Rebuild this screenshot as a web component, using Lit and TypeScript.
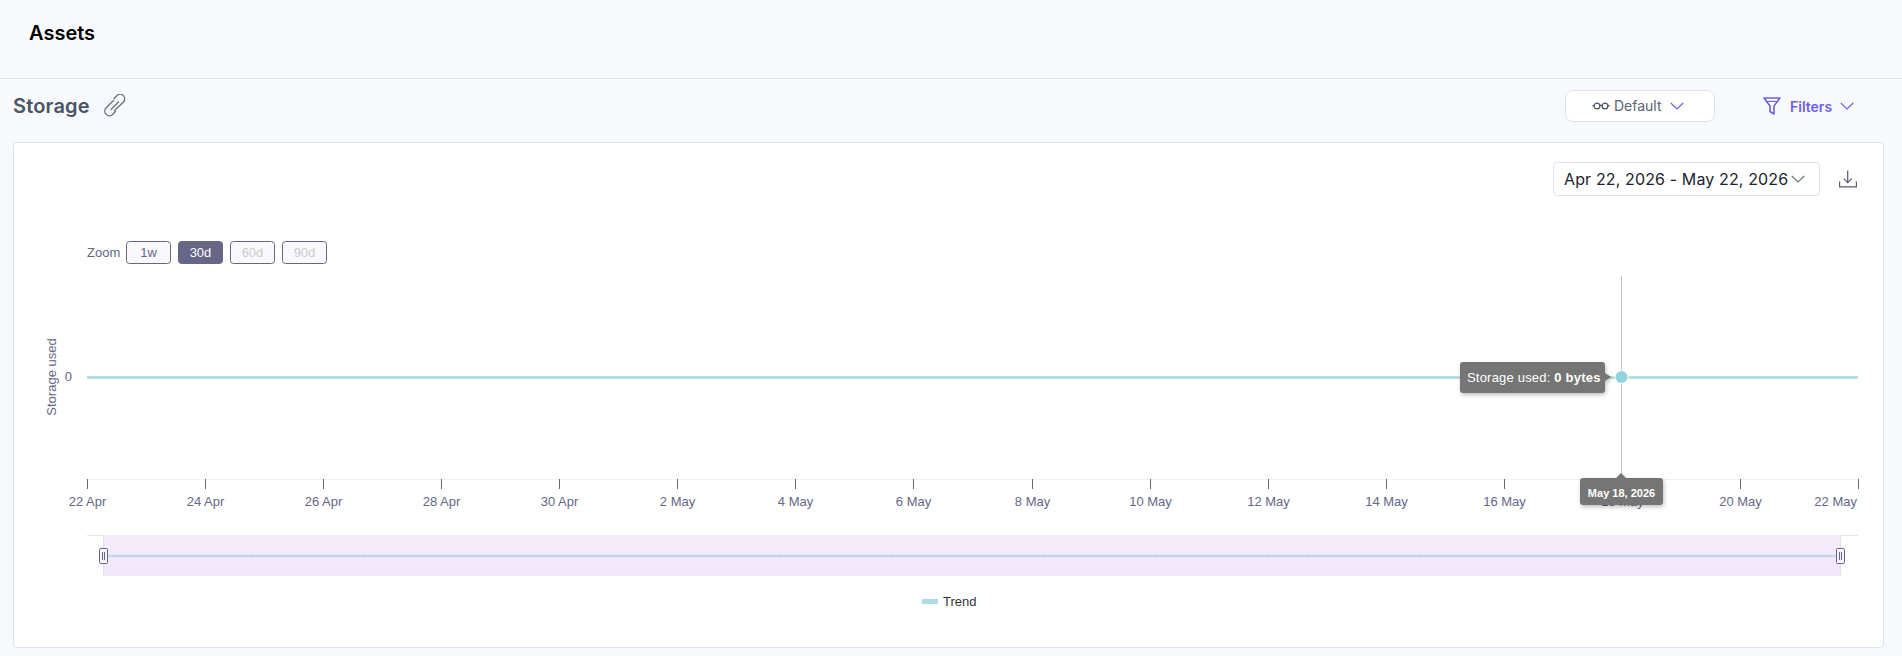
import { LitElement, html, svg, css } from 'lit';
import { customElement } from 'lit/decorators.js';

const TICKS = ['22 Apr', '24 Apr', '26 Apr', '28 Apr', '30 Apr', '2 May', '4 May', '6 May', '8 May', '10 May', '12 May', '14 May', '16 May', '18 May', '20 May', '22 May'];
const X0 = 87;
const X1 = 1858;
const CROSS = 1621;

const chevron = (color: string) => html`<svg class="chev" width="14" height="8" viewBox="0 0 14 8" fill="none"><path d="M.8 1l6.2 6 6.2-6" stroke=${color} stroke-width="1.15"/></svg>`;

@customElement('app-root')
export class AppRoot extends LitElement {
  static styles = css`
    :host {
      display: block;
      height: 656px;
      background: #f8f9fd;
      font-family: Inter, 'Liberation Sans', sans-serif;
      overflow: hidden;
    }
    .top {
      height: 79px;
      box-sizing: border-box;
      border-bottom: 1px solid #dde3ee;
      padding: 21px 29px 0;
      font-size: 20px;
      line-height: 24px;
      font-weight: 600;
      color: #000;
    }
    .bar {
      height: 63px;
      display: flex;
      align-items: center;
      padding: 0 0 9px 13px;
      box-sizing: border-box;
    }
    .title {
      font-size: 20px;
      font-weight: 600;
      letter-spacing: 0.15px;
      color: #4a5463;
      margin-right: 13px;
    }
    .spacer {
      flex: 1;
    }
    .view {
      width: 150px;
      height: 32px;
      box-sizing: border-box;
      padding-left: 26px;
      background: #fff;
      border: 1px solid #dde3ee;
      border-radius: 8px;
      display: flex;
      align-items: center;
      font-size: 14px;
      line-height: 28px;
      color: #5a6473;
    }
    .view svg:first-child {
      margin-right: 4px;
    }
    .view .chev {
      margin-left: 8px;
    }
    .filters {
      width: 187px;
      padding-left: 48px;
      box-sizing: border-box;
      display: flex;
      align-items: center;
      font-size: 14px;
      font-weight: 600;
      color: #6f5ee8;
    }
    .filters svg:first-child {
      margin-right: 9px;
    }
    .filters .chev {
      margin-left: 8px;
    }
    .card {
      margin: 0 18px 0 13px;
      height: 506px;
      box-sizing: border-box;
      background: #fff;
      border: 1px solid #dde3ee;
      border-radius: 4px;
      position: relative;
    }
    .tools {
      display: flex;
      justify-content: flex-end;
      align-items: center;
      gap: 19px;
      padding: 19px 26px 0 0;
      position: relative;
      z-index: 1;
    }
    .range {
      width: 267px;
      height: 34px;
      box-sizing: border-box;
      border: 1px solid #dde3ee;
      border-radius: 4px;
      display: flex;
      align-items: center;
      padding-left: 10px;
      font-size: 16px;
      letter-spacing: 0.13px;
      color: #1d2430;
      white-space: nowrap;
    }
    .range .chev {
      margin-left: 3px;
    }
    .plot {
      position: absolute;
      left: -14px;
      top: -143px;
    }
    .plot text {
      font-family: 'Liberation Sans', Arial, sans-serif;
      font-size: 13px;
      fill: #666687;
    }
    .plot .tip {
      fill: #fff;
      letter-spacing: 0.2px;
    }
    .plot .tipdate {
      fill: #fff;
      font-size: 11px;
      font-weight: 700;
    }
    .plot .legend {
      fill: #333;
    }
  `;

  private zoomBtn(x: number, label: string, mode: string) {
    const fill = mode === 'on' ? '#666687' : '#f9f8fe';
    const ink = mode === 'on' ? '#fff' : mode === 'off' ? '#cccccc' : '#666687';
    return svg`<rect x=${x + 0.5} y="241.5" width="44" height="22" rx="3" fill=${fill} stroke="#666687"/>
      <text x=${x + 22.5} y="257" text-anchor="middle" style="fill:${ink}">${label}</text>`;
  }

  private chart() {
    const step = (X1 - X0) / (TICKS.length - 1);
    const nav: number[] = [];
    for (let x = 110; x < 1836; x += 6.6) nav.push(x);
    return svg`
      <defs>
        <linearGradient id="mask" x1="0" y1="0" x2="0" y2="1"><stop offset="0" stop-color="#f5ecfb"/><stop offset="1" stop-color="#f0e8fa"/></linearGradient>
        <filter id="sh" x="-10%" y="-20%" width="120%" height="150%"><feDropShadow dx="1" dy="2" stdDeviation="2" flood-color="#000" flood-opacity="0.25"/></filter>
      </defs>
      <text x="87" y="257">Zoom</text>
      ${this.zoomBtn(126, '1w', 'idle')}
      ${this.zoomBtn(178, '30d', 'on')}
      ${this.zoomBtn(230, '60d', 'off')}
      ${this.zoomBtn(282, '90d', 'off')}
      <text transform="translate(56 377) rotate(-90)" text-anchor="middle">Storage used</text>
      <text x="72" y="381" text-anchor="end">0</text>
      <line x1=${X0} x2=${X1} y1="479.5" y2="479.5" stroke="#f0f0f3"/>
      ${TICKS.map((t, i) => {
        const x = Math.round(X0 + step * i) + 0.5;
        const last = i === TICKS.length - 1;
        return svg`<line x1=${x} x2=${x} y1="479" y2="489" stroke="#666687"/>
          <text x=${last ? X1 - 1 : x} y="506" text-anchor=${last ? 'end' : 'middle'}>${t}</text>`;
      })}
      <line x1=${X0} x2=${X1} y1="377.5" y2="377.5" stroke="#a0dbe0" stroke-width="2.6"/>
      <line x1=${CROSS + 0.5} x2=${CROSS + 0.5} y1="276" y2="479" stroke="#c4c4c8"/>
      <circle cx=${CROSS + 0.5} cy="377" r="7" fill="#fff"/>
      <circle cx=${CROSS + 0.5} cy="377" r="6" fill="#8ed3df"/>
      <g filter="url(#sh)">
        <path d="M1463 362h139a3 3 0 0 1 3 3v8l6 4-6 4v9a3 3 0 0 1-3 3h-139a3 3 0 0 1-3-3v-25a3 3 0 0 1 3-3z" fill="#757575"/>
      </g>
      <text class="tip" x="1467" y="382">Storage used: <tspan font-weight="700">0 bytes</tspan></text>
      <g filter="url(#sh)">
        <path d="M1583 478h33l5-5 5 5h34a3 3 0 0 1 3 3v21a3 3 0 0 1-3 3h-77a3 3 0 0 1-3-3v-21a3 3 0 0 1 3-3z" fill="#757575"/>
      </g>
      <text class="tipdate" x="1621.5" y="497" text-anchor="middle">May 18, 2026</text>
      <line x1=${X0} x2=${X1} y1="535.5" y2="535.5" stroke="#e6e6ec"/>
      <rect x="103" y="535" width="1738" height="41" fill="url(#mask)"/>
      <line x1="103.5" x2="103.5" y1="535" y2="576" stroke="#e3e3ef"/>
      <line x1="1840.5" x2="1840.5" y1="535" y2="576" stroke="#dfe3f2"/>
      <line x1="103" x2="1841" y1="556" y2="556" stroke="#bfd5ea" stroke-width="2.4"/>
      ${nav.map((x) => svg`<line x1=${x} x2=${x} y1="555" y2="557" stroke="#cddcec"/>`)}
      ${[99.5, 1836.5].map((x) => svg`<rect x=${x} y="548.5" width="8" height="15" rx="1" fill="#f4f3fb" stroke="#666687"/>
        <line x1=${x + 3} x2=${x + 3} y1="552" y2="560" stroke="#666687"/>
        <line x1=${x + 5} x2=${x + 5} y1="552" y2="560" stroke="#666687"/>`)}
      <rect x="922" y="599" width="16" height="5" fill="#a9dde3"/>
      <text class="legend" x="943" y="606">Trend</text>
    `;
  }

  render() {
    return html`
      <div class="top">Assets</div>
      <div class="bar">
        <span class="title">Storage</span>
        <svg width="24" height="24" viewBox="0 0 24 24" fill="none" stroke="#6b7280" stroke-width="1.4" stroke-linecap="round">
          <path d="M10.5 6.5l-7.5 7.5a4.6 4.6 0 0 0 6.5 6.5l3-3"/>
          <path d="M11.5 16.5l9-8.5a4.6 4.6 0 0 0-6.5-6.5l-3 3"/>
          <path d="M8 15.5l7.5-7.5"/>
        </svg>
        <span class="spacer"></span>
        <div class="view">
          <svg width="18" height="8" viewBox="0 0 18 8" fill="none" stroke="#4a5463" stroke-width="1.2"><circle cx="5" cy="4" r="2.9"/><circle cx="13" cy="4" r="2.9"/><path d="M7.9 3.4h2.2M2.1 3.4L.3 4M15.9 3.4l1.8.6"/></svg>
          <span>Default</span>
          ${chevron('#6f5ee8')}
        </div>
        <div class="filters">
          <svg width="18" height="18" viewBox="0 0 18 18" fill="none" stroke="#6f5ee8" stroke-width="1.6" stroke-linejoin="round"><path d="M1 1h16l-6 8v8l-4-2.5V9z"/><path d="M3.5 4.4h11" stroke-width="1.1"/></svg>
          <span>Filters</span>
          ${chevron('#6f5ee8')}
        </div>
      </div>
      <div class="card">
        <svg class="plot" width="1902" height="656" viewBox="0 0 1902 656">${this.chart()}</svg>
        <div class="tools">
          <div class="range">
            <span>Apr 22, 2026 - May 22, 2026</span>
            ${chevron('#6b7280')}
          </div>
          <svg width="18" height="18" viewBox="0 0 18 18" fill="none" stroke="#555f6e" stroke-width="1.2"><path d="M8.7 .5v12M4.7 8.7l4 4 4-4"/><path d="M.6 11.5v5.4h16.8v-5.4"/></svg>
        </div>
      </div>
    `;
  }
}
